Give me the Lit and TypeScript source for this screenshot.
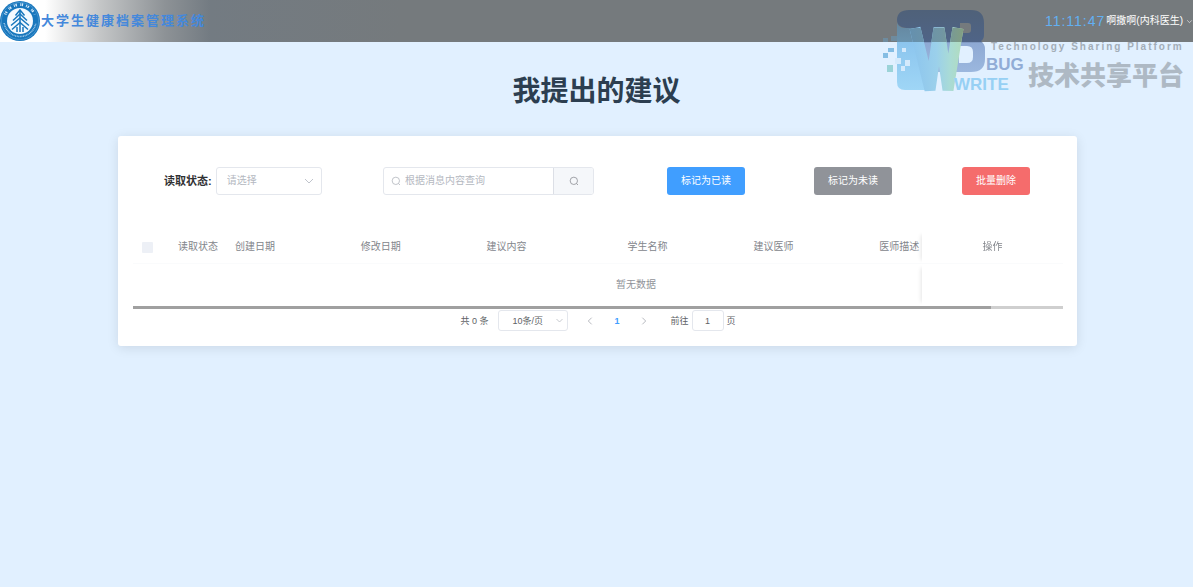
import { LitElement, html, css, svg } from "lit";
import { customElement, property, state } from "lit/decorators.js";

const COLUMNS = ["读取状态", "创建日期", "修改日期", "建议内容", "学生名称", "建议医师", "医师描述"];

const searchIcon = svg`<svg class="icon" viewBox="0 0 12 12" aria-hidden="true">
  <circle cx="5.8" cy="5.8" r="4.4"></circle><path d="M9 9l1.8 1.8"></path></svg>`;
const downIcon = svg`<svg class="icon" viewBox="0 0 12 12" aria-hidden="true"><path d="M2 4l4 4 4-4"></path></svg>`;
const leftIcon = svg`<svg class="icon" viewBox="0 0 12 12" aria-hidden="true"><path d="M8 2L4 6l4 4"></path></svg>`;
const rightIcon = svg`<svg class="icon" viewBox="0 0 12 12" aria-hidden="true"><path d="M4 2l4 4-4 4"></path></svg>`;

@customElement("school-seal")
class SchoolSeal extends LitElement {
  static styles = css`
    :host { display: block; width: 40px; height: 40px; }
    .seal { display: block; width: 100%; height: 100%; }
  `;
  render() {
    return html`<svg class="seal" viewBox="0 0 40 40" aria-hidden="true">
      <circle cx="20" cy="20" r="20" fill="#1877bd"></circle>
      <circle cx="20" cy="20" r="18.6" fill="none" stroke="#5ba3d6" stroke-width=".6"></circle>
      <circle cx="20" cy="20" r="13" fill="#f4faff"></circle>
      <path d="M5.2 13.5A16 16 0 0 1 34.8 13.5" fill="none" stroke="#d7eafa" stroke-width="2.6" stroke-dasharray="1 .8 1.4 3.4 .8 .6 1.5 3"></path>
      <path d="M4.2 22A16 16 0 0 0 35.8 22" fill="none" stroke="#a5cdec" stroke-width="1.5" stroke-dasharray=".9 .7"></path>
      <g fill="none" stroke="#1877bd" stroke-width="1.5">
        <path d="M20 9v22M15.500 14.500L20 9l4.500 5.500"></path>
        <path d="M13 19.500L20 13l7 6.500"></path>
        <path d="M11 24.500L20 17l9 7.500"></path>
        <path d="M12 28.500L20 21.500l8 7"></path>
        <path d="M17 31v-5M23 31v-5"></path>
      </g>
    </svg>`;
  }
}

@customElement("platform-mark")
class PlatformMark extends LitElement {
  static styles = css`
    :host { display: block; width: 316px; height: 92px; pointer-events: none; }
    .mark { display: block; width: 100%; height: 100%; }
    .latin { font-family: "Liberation Sans", sans-serif; font-weight: 700; font-size: 17px; }
    .tag { font-family: "Liberation Sans", sans-serif; font-weight: 700; font-size: 10px; letter-spacing: 2px; fill: #a3adb7; }
    .name { font-family: "Noto Sans CJK SC", sans-serif; font-weight: 900; font-size: 26px; fill: #aeb9c4; }
  `;
  render() {
    return html`<svg class="mark" viewBox="876 4 316 92" role="img" aria-label="BUG WRITE">
      <defs>
        <linearGradient id="body" gradientUnits="userSpaceOnUse" x1="0" y1="20" x2="0" y2="90">
          <stop offset="0" stop-color="#64859d"></stop><stop offset=".31" stop-color="#6a93ae"></stop>
          <stop offset=".32" stop-color="#8cc5ee"></stop><stop offset="1" stop-color="#9fd6f6"></stop>
        </linearGradient>
        <linearGradient id="bowl" gradientUnits="userSpaceOnUse" x1="0" y1="10" x2="0" y2="74">
          <stop offset="0" stop-color="#4f6179"></stop><stop offset=".5" stop-color="#4f6487"></stop>
          <stop offset=".51" stop-color="#8ea9d3"></stop><stop offset="1" stop-color="#9cb8df"></stop>
        </linearGradient>
        <linearGradient id="ribbon" gradientUnits="userSpaceOnUse" x1="910" y1="0" x2="963" y2="0">
          <stop offset="0" stop-color="#8bc4ee"></stop><stop offset=".5" stop-color="#9bd0eb"></stop>
          <stop offset=".75" stop-color="#a9dbd6"></stop><stop offset="1" stop-color="#b2dcbd"></stop>
        </linearGradient>
        <linearGradient id="shade" gradientUnits="userSpaceOnUse" x1="910" y1="0" x2="963" y2="0">
          <stop offset="0" stop-color="#6590ae"></stop><stop offset=".6" stop-color="#7196a3"></stop>
          <stop offset="1" stop-color="#829f83"></stop>
        </linearGradient>
        <clipPath id="upper"><path d="M900 28h70v14h-70z"></path></clipPath>
      </defs>
      <path d="M897 21q0 7 8 7h28v62h-28q-8 0-8-8z" fill="url(#body)"></path>
      <path fill="url(#bowl)" fill-rule="evenodd" d="M909 10h62q13 0 13 13v12q0 4-3 6q4 3 4 8v10q0 13-14 13h-42l-9-44h-11q-12 0-12-8q0-10 12-10zM960 23h8q3 0 3 3v4q0 3-3 3h-8zM959 46h8q6 0 6 6v5q0 6-6 6h-8z"></path>
      <path d="M915 28L930 90L939 28L948 90L958 28" fill="none" stroke="url(#ribbon)" stroke-width="11" stroke-linejoin="bevel"></path>
      <path d="M915 28L930 90L939 28L948 90L958 28" fill="none" stroke="url(#shade)" stroke-width="11" stroke-linejoin="bevel" clip-path="url(#upper)"></path>
      <path d="M883 38h5v4h-5zM891 36h6v5h-6z" fill="#6e8b9e"></path>
      <g fill="#85bde3">
        <path d="M888 48h6v4h-6zM883 53h5v5h-5z"></path>
        <path d="M887 65h6v7h-6z" fill="#9bd3d8"></path>
      </g>
      <g fill="#d5eafc"><path d="M895 58h6v6h-6zM905 60h5v6h-5zM901 66h4v5h-4zM902 48h4v4h-4z"></path></g>
      <text class="latin" x="986" y="70" fill="#91acd6">BUG</text>
      <text class="latin" x="954" y="90" fill="#97d0f4">WRITE</text>
      <text class="tag" x="991" y="50">Technology Sharing Platform</text>
      <text class="name" x="1028" y="85">技术共享平台</text>
    </svg>`;
  }
}

@customElement("app-root")
class AppRoot extends LitElement {
  @property() clock = "11:11:47";
  @property() user = "啊撒啊(内科医生)";
  @state() page = 1;

  static styles = css`
    :host {
      display: block; position: relative; min-height: 100vh; overflow: hidden;
      background: #e1f0ff; color: #606266; font-size: 10px; line-height: 16px;
      font-family: "Liberation Sans", "Noto Sans CJK SC", sans-serif;
    }
    * { box-sizing: border-box; }
    button, input, select { font: inherit; color: inherit; margin: 0; }
    .icon { display: block; width: 12px; height: 12px; fill: none; stroke: currentColor; stroke-width: 1; }
    .bar { display: flex; align-items: center; justify-content: space-between; height: 42px;
      background: linear-gradient(90deg, #fff 45px, #c4c6c7 100px, #8d9296 165px, #737b82 210px, #757a7d 400px); }
    .brand { display: flex; align-items: center; gap: 1px; }
    .product { font-size: 13px; font-weight: 700; letter-spacing: 2px; color: #4488dc; }
    .account { display: flex; align-items: center; gap: 1px; }
    .clock { font-size: 14px; letter-spacing: 1px; color: #62b0f2; }
    .user { display: flex; align-items: center; gap: 3px; padding: 0; border: 0; background: none; color: #fff; white-space: nowrap; }
    .user .icon { width: 7px; height: 7px; }
    .watermark { position: absolute; top: 4px; right: 1px; }
    .title { margin: 29px 0 23px; font-size: 28px; line-height: 42px; text-align: center; color: #2c3e50; }
    .card { margin: 0 116px 0 118px; padding: 31px 14px 15px 15px; background: #fff; border-radius: 3px; box-shadow: 0 2px 12px rgba(0, 0, 0, .1); }
    .tools { display: grid; grid-template-columns: 219fr 284fr 147fr 148fr 70fr; align-items: center; padding: 0 31px; }
    .field { display: flex; align-items: center; gap: 4px; }
    .label { font-size: 11px; font-weight: 700; color: #303133; }
    .pick { position: relative; display: block; width: 106px; }
    .pick .icon { position: absolute; right: 7px; top: 8px; color: #c0c4cc; pointer-events: none; }
    .select { width: 100%; height: 28px; padding: 0 10px; appearance: none; border: 1px solid #e4e7ed; border-radius: 3px; background: #fff; color: #b4b8bf; }
    .search { display: flex; width: 211px; height: 28px; border: 1px solid #e4e7ed; border-radius: 3px; overflow: hidden; }
    .query { display: flex; flex: 1; align-items: center; gap: 4px; padding-left: 7px; color: #b4b8bf; }
    .search .icon { width: 10px; height: 10px; }
    .input { flex: 1; min-width: 0; padding: 0; border: 0; background: none; outline: 0; }
    .input::placeholder { color: #b4b8bf; opacity: 1; }
    .go { display: grid; place-items: center; width: 40px; padding: 0; border: 0; border-left: 1px solid #dcdfe6; background: #f5f7fa; color: #909399; }
    .action { justify-self: start; height: 28px; padding: 0 14px; border: 0; border-radius: 3px; color: #fff; white-space: nowrap; }
    .primary { background: #409eff; }
    .info { background: #909399; }
    .danger { background: #f56c6c; }
    .scroller { margin-top: 36px; overflow: hidden; }
    .table { width: 100%; min-width: 1013px; table-layout: fixed; border-collapse: separate; border-spacing: 0; color: #83868c; }
    .table th { height: 33px; padding: 0; font-weight: 400; text-align: left; vertical-align: middle; border-bottom: 1px solid #fafbfc; }
    .check { width: 45px; } .narrow { width: 57px; } .wide { width: 141px; } .fixed { width: 141px; }
    .table .tick { padding-left: 9px; }
    .box { display: block; width: 11px; height: 11px; margin: 0; appearance: none; background: #edf0f6; border-radius: 1px; }
    .table .last { position: sticky; right: 0; background: #fff; text-align: center; box-shadow: -5px 0 4px -4px rgba(0, 0, 0, .1); }
    .empty { height: 42px; padding: 0 0 0 134px; text-align: center; color: #909399; }
    .track { height: 3px; background: #cfcfcf; }
    .thumb { height: 100%; background: #a0a0a0; }
    .pager { display: flex; align-items: center; justify-content: center; margin-top: 1px; font-size: 9px; }
    .size { position: relative; width: 70px; margin: 0 8px 0 10px; }
    .size .select, .jump { height: 21px; color: #606266; }
    .size .select { padding: 0 13px; }
    .size .icon { position: absolute; right: 4px; top: 6px; width: 9px; height: 9px; color: #b4b8bf; pointer-events: none; }
    .step { display: grid; place-items: center; width: 27px; height: 21px; padding: 0; border: 0; background: none; color: #a8abb2; }
    .step .icon { width: 10px; height: 10px; }
    .step.current { color: #409eff; font-weight: 700; }
    .goto { display: flex; align-items: center; gap: 3px; margin-left: 13px; }
    .jump { width: 32px; padding: 0; text-align: center; border: 1px solid #e4e7ed; border-radius: 3px; }
  `;

  render() {
    const thumb = (930 / 1008) * 100;
    return html`
      <header class="bar">
        <div class="brand"><school-seal></school-seal><span class="product">大学生健康档案管理系统</span></div>
        <div class="account"><time class="clock">${this.clock}</time>
          <button class="user">${this.user}${downIcon}</button></div>
      </header>
      <platform-mark class="watermark"></platform-mark>
      <main>
        <h1 class="title">我提出的建议</h1>
        <section class="card">
          <div class="tools">
            <div class="field">
              <label class="label" for="status">读取状态:</label>
              <span class="pick"><select class="select" id="status"><option>请选择</option><option>已读</option><option>未读</option></select>${downIcon}</span>
            </div>
            <div class="search">
              <label class="query">${searchIcon}<input class="input" type="text" aria-label="根据消息内容查询" placeholder="根据消息内容查询"></label>
              <button class="go" aria-label="查询">${searchIcon}</button>
            </div>
            <button class="action primary">标记为已读</button>
            <button class="action info">标记为未读</button>
            <button class="action danger">批量删除</button>
          </div>
          <div class="scroller">
            <table class="table">
              <colgroup><col class="check"><col class="narrow"><col><col><col class="wide"><col><col><col><col class="fixed"></colgroup>
              <thead><tr>
                <th class="tick"><input class="box" type="checkbox" aria-label="全选" disabled></th>
                ${COLUMNS.map((name) => html`<th>${name}</th>`)}
                <th class="last">操作</th>
              </tr></thead>
              <tbody><tr><td class="empty" colspan="8">暂无数据</td><td class="last"></td></tr></tbody>
            </table>
          </div>
          <div class="track"><div class="thumb" style="width:${thumb}%"></div></div>
          <nav class="pager" aria-label="分页">
            <span>共 0 条</span>
            <span class="size"><select class="select" aria-label="每页条数"><option>10条/页</option></select>${downIcon}</span>
            <button class="step" aria-label="上一页" disabled>${leftIcon}</button>
            <button class="step current">${this.page}</button>
            <button class="step" aria-label="下一页" disabled>${rightIcon}</button>
            <label class="goto">前往<input class="jump" type="text" .value=${String(this.page)}>页</label>
          </nav>
        </section>
      </main>`;
  }
}
